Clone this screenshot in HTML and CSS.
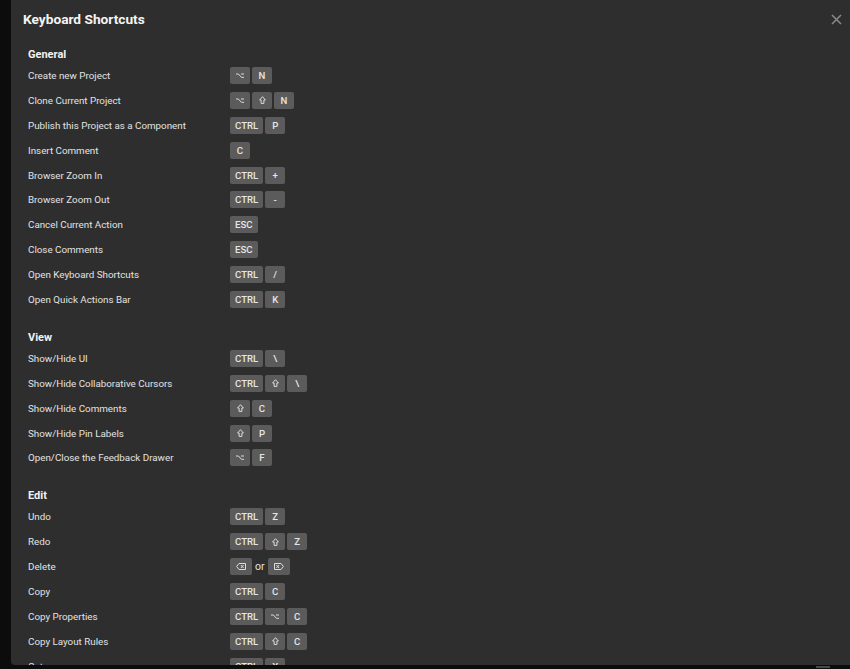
FILE: index.html
```html
<!DOCTYPE html>
<html>
<head>
<meta charset="utf-8">
<link rel="stylesheet" href="styles.css">
</head>
<body>
<div class="page">
  <div class="modal">
    <div class="header">
      <h1 class="title">Keyboard Shortcuts</h1>
      <svg class="close" width="11" height="11" viewBox="0 0 11 11"><path d="M1 1L10 10M10 1L1 10" stroke="#8a8a8a" stroke-width="1.5" fill="none"/></svg>
    </div>

    <section class="section">
      <h2 class="heading">General</h2>
      <div class="row"><span class="label">Create new Project</span><span class="keys"><kbd class="key"><svg class="ico" width="8" height="5" viewBox="0 0 8 5"><path d="M0 1H2.4L5.4 4.3H8M5 1H8"/></svg></kbd><kbd class="key">N</kbd></span></div>
      <div class="row"><span class="label">Clone Current Project</span><span class="keys"><kbd class="key"><svg class="ico" width="8" height="5" viewBox="0 0 8 5"><path d="M0 1H2.4L5.4 4.3H8M5 1H8"/></svg></kbd><kbd class="key"><svg class="ico" width="7" height="8" viewBox="0 0 7 8"><path d="M3.5 0.7L6.4 4H4.9V7.4H2.1V4H0.6Z"/></svg></kbd><kbd class="key">N</kbd></span></div>
      <div class="row"><span class="label">Publish this Project as a Component</span><span class="keys"><kbd class="key">CTRL</kbd><kbd class="key">P</kbd></span></div>
      <div class="row"><span class="label">Insert Comment</span><span class="keys"><kbd class="key">C</kbd></span></div>
      <div class="row"><span class="label">Browser Zoom In</span><span class="keys"><kbd class="key">CTRL</kbd><kbd class="key">+</kbd></span></div>
      <div class="row"><span class="label">Browser Zoom Out</span><span class="keys"><kbd class="key">CTRL</kbd><kbd class="key">-</kbd></span></div>
      <div class="row"><span class="label">Cancel Current Action</span><span class="keys"><kbd class="key">ESC</kbd></span></div>
      <div class="row"><span class="label">Close Comments</span><span class="keys"><kbd class="key">ESC</kbd></span></div>
      <div class="row"><span class="label">Open Keyboard Shortcuts</span><span class="keys"><kbd class="key">CTRL</kbd><kbd class="key">/</kbd></span></div>
      <div class="row"><span class="label">Open Quick Actions Bar</span><span class="keys"><kbd class="key">CTRL</kbd><kbd class="key">K</kbd></span></div>
    </section>

    <section class="section">
      <h2 class="heading">View</h2>
      <div class="row"><span class="label">Show/Hide UI</span><span class="keys"><kbd class="key">CTRL</kbd><kbd class="key">\</kbd></span></div>
      <div class="row"><span class="label">Show/Hide Collaborative Cursors</span><span class="keys"><kbd class="key">CTRL</kbd><kbd class="key"><svg class="ico" width="7" height="8" viewBox="0 0 7 8"><path d="M3.5 0.7L6.4 4H4.9V7.4H2.1V4H0.6Z"/></svg></kbd><kbd class="key">\</kbd></span></div>
      <div class="row"><span class="label">Show/Hide Comments</span><span class="keys"><kbd class="key"><svg class="ico" width="7" height="8" viewBox="0 0 7 8"><path d="M3.5 0.7L6.4 4H4.9V7.4H2.1V4H0.6Z"/></svg></kbd><kbd class="key">C</kbd></span></div>
      <div class="row"><span class="label">Show/Hide Pin Labels</span><span class="keys"><kbd class="key"><svg class="ico" width="7" height="8" viewBox="0 0 7 8"><path d="M3.5 0.7L6.4 4H4.9V7.4H2.1V4H0.6Z"/></svg></kbd><kbd class="key">P</kbd></span></div>
      <div class="row"><span class="label">Open/Close the Feedback Drawer</span><span class="keys"><kbd class="key"><svg class="ico" width="8" height="5" viewBox="0 0 8 5"><path d="M0 1H2.4L5.4 4.3H8M5 1H8"/></svg></kbd><kbd class="key">F</kbd></span></div>
    </section>

    <section class="section">
      <h2 class="heading">Edit</h2>
      <div class="row"><span class="label">Undo</span><span class="keys"><kbd class="key">CTRL</kbd><kbd class="key">Z</kbd></span></div>
      <div class="row"><span class="label">Redo</span><span class="keys"><kbd class="key">CTRL</kbd><kbd class="key"><svg class="ico" width="7" height="8" viewBox="0 0 7 8"><path d="M3.5 0.7L6.4 4H4.9V7.4H2.1V4H0.6Z"/></svg></kbd><kbd class="key">Z</kbd></span></div>
      <div class="row"><span class="label">Delete</span><span class="keys"><kbd class="key wide"><svg class="ico" width="10" height="7" viewBox="0 0 10 7"><path d="M3 0.5H9.5V6.5H3L0.6 3.5Z M4.9 2L7.6 5M7.6 2L4.9 5"/></svg></kbd><span class="or">or</span><kbd class="key wide"><svg class="ico" width="10" height="7" viewBox="0 0 10 7"><path d="M0.5 0.5H7L9.4 3.5L7 6.5H0.5Z M2.4 2L5.1 5M5.1 2L2.4 5"/></svg></kbd></span></div>
      <div class="row"><span class="label">Copy</span><span class="keys"><kbd class="key">CTRL</kbd><kbd class="key">C</kbd></span></div>
      <div class="row"><span class="label">Copy Properties</span><span class="keys"><kbd class="key">CTRL</kbd><kbd class="key"><svg class="ico" width="8" height="5" viewBox="0 0 8 5"><path d="M0 1H2.4L5.4 4.3H8M5 1H8"/></svg></kbd><kbd class="key">C</kbd></span></div>
      <div class="row"><span class="label">Copy Layout Rules</span><span class="keys"><kbd class="key">CTRL</kbd><kbd class="key"><svg class="ico" width="7" height="8" viewBox="0 0 7 8"><path d="M3.5 0.7L6.4 4H4.9V7.4H2.1V4H0.6Z"/></svg></kbd><kbd class="key">C</kbd></span></div>
      <div class="row"><span class="label">Cut</span><span class="keys"><kbd class="key">CTRL</kbd><kbd class="key">X</kbd></span></div>
    </section>
  </div>
  <div class="bottom"><span class="thumb"></span></div>
</div>
</body>
</html>
```

FILE: styles.css
```css
* { box-sizing: border-box; }
html, body {
  margin: 0;
  padding: 0;
  width: 850px;
  height: 669px;
  overflow: hidden;
  background: #0c0c0c;
  font-family: Roboto, "Liberation Sans", sans-serif;
}
.page {
  width: 850px;
  height: 669px;
  display: flex;
  flex-direction: column;
  padding-left: 11px;
}
.modal {
  height: 665px;
  background: #2e2e2e;
  border-radius: 0 0 0 4px;
  overflow: hidden;
  padding-left: 17px;
}
.header {
  height: 29px;
  padding-top: 10px;
  display: flex;
  justify-content: space-between;
  align-items: flex-start;
  margin-left: -5px;
  padding-right: 8px;
}
.title {
  margin: 0;
  font-size: 13.7px;
  line-height: 19px;
  font-weight: 700;
  color: #f4f4f4;
}
.close {
  margin-top: 4px;
}
.section {
  margin-top: 18px;
}
.heading {
  margin: 0;
  height: 16px;
  font-size: 11px;
  line-height: 16px;
  font-weight: 700;
  color: #f2f2f2;
}
.row {
  height: 24.9px;
  display: flex;
  align-items: center;
}
.label {
  width: 202px;
  font-size: 9.8px;
  color: #e2e2e2;
}
.keys {
  display: flex;
  align-items: center;
  gap: 2px;
}
.key {
  height: 17px;
  min-width: 20px;
  padding: 0 5px;
  display: inline-flex;
  align-items: center;
  justify-content: center;
  background: #5b5b5b;
  color: #e6e6e6;
  border-radius: 2px;
  font-family: Roboto, "Liberation Sans", sans-serif;
  font-size: 9.6px;
  font-weight: 500;
}
.key.wide {
  padding: 0 6px;
}
.ico {
  display: block;
  fill: none;
  stroke: #dcdcdc;
  stroke-width: 1;
}
.or {
  font-size: 10.5px;
  color: #e2e2e2;
  margin: 0 1px;
}
.bottom {
  height: 4px;
  display: flex;
  justify-content: flex-end;
  padding-right: 20px;
}
.thumb {
  width: 14px;
  height: 2px;
  margin-top: 1px;
  background: #4a4a4a;
}
```
